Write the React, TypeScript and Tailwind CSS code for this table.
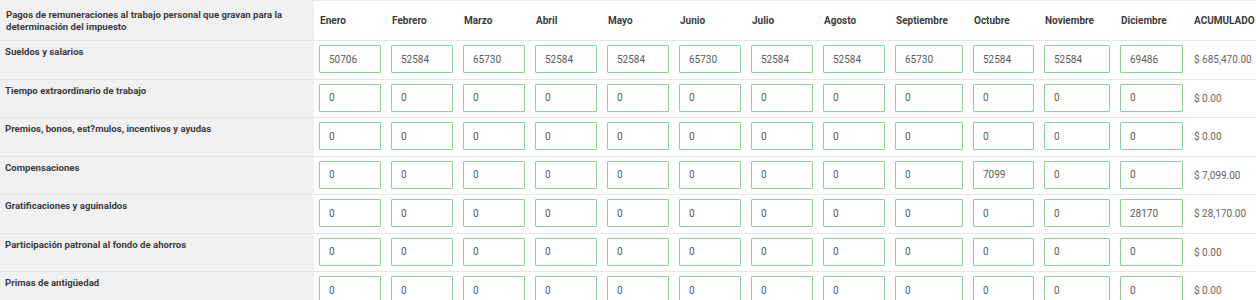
import React from "react";

const months = [
  "Enero",
  "Febrero",
  "Marzo",
  "Abril",
  "Mayo",
  "Junio",
  "Julio",
  "Agosto",
  "Septiembre",
  "Octubre",
  "Noviembre",
  "Diciembre",
];

const rows: { label: string; values: string[]; total: string }[] = [
  {
    label: "Sueldos y salarios",
    values: ["50706", "52584", "65730", "52584", "52584", "65730", "52584", "52584", "65730", "52584", "52584", "69486"],
    total: "$ 685,470.00",
  },
  {
    label: "Tiempo extraordinario de trabajo",
    values: ["0", "0", "0", "0", "0", "0", "0", "0", "0", "0", "0", "0"],
    total: "$ 0.00",
  },
  {
    label: "Premios, bonos, est?mulos, incentivos y ayudas",
    values: ["0", "0", "0", "0", "0", "0", "0", "0", "0", "0", "0", "0"],
    total: "$ 0.00",
  },
  {
    label: "Compensaciones",
    values: ["0", "0", "0", "0", "0", "0", "0", "0", "0", "7099", "0", "0"],
    total: "$ 7,099.00",
  },
  {
    label: "Gratificaciones y aguinaldos",
    values: ["0", "0", "0", "0", "0", "0", "0", "0", "0", "0", "0", "28170"],
    total: "$ 28,170.00",
  },
  {
    label: "Participación patronal al fondo de ahorros",
    values: ["0", "0", "0", "0", "0", "0", "0", "0", "0", "0", "0", "0"],
    total: "$ 0.00",
  },
  {
    label: "Primas de antigüedad",
    values: ["0", "0", "0", "0", "0", "0", "0", "0", "0", "0", "0", "0"],
    total: "$ 0.00",
  },
];

const gridCols =
  "grid grid-cols-[314px_72px_72px_72px_72px_72px_72px_72px_72px_78px_71px_76px_73px_68px]";

export default function App() {
  return (
    <div
      className="w-[1256px] h-[300px] overflow-hidden bg-white text-[10px]"
      style={{ fontFamily: "Roboto, 'Liberation Sans', sans-serif" }}
    >
      <div className={`${gridCols} h-[40px] border-t border-[#ececec]`}>
        <div className="bg-[#f1f1f1] pl-[6px] pr-[20px] flex items-center font-bold text-[9.6px] leading-[12px] text-[#3c3c3c]">
          Pagos de remuneraciones al trabajo personal que gravan para la determinación del impuesto
        </div>
        {months.map((m) => (
          <div key={m} className="px-[6px] flex items-center font-bold text-[#3c3c3c]">
            {m}
          </div>
        ))}
        <div className="px-[6px] flex items-center font-bold text-[#3c3c3c]">ACUMULADO</div>
      </div>
      {rows.map((r) => (
        <div key={r.label} className={`${gridCols} h-[38.5px] border-t border-[#e6e6e6]`}>
          <div className="bg-[#f1f1f1] pl-[5px] pt-[5px] font-bold text-[9.6px] leading-[12px] text-[#3c3c3c]">
            {r.label}
          </div>
          {r.values.map((v, i) => (
            <div key={i} className="px-[5px] pt-[4px]">
              <input
                readOnly
                value={v}
                className="w-full h-[28px] border border-[#8fcf9f] rounded-[1px] pl-[9px] text-[10px] text-[#5a5a5a] outline-none bg-white"
                style={{ fontFamily: "Roboto, 'Liberation Sans', sans-serif" }}
              />
            </div>
          ))}
          <div className="pl-[6px] flex items-center text-[#666]">{r.total}</div>
        </div>
      ))}
    </div>
  );
}
